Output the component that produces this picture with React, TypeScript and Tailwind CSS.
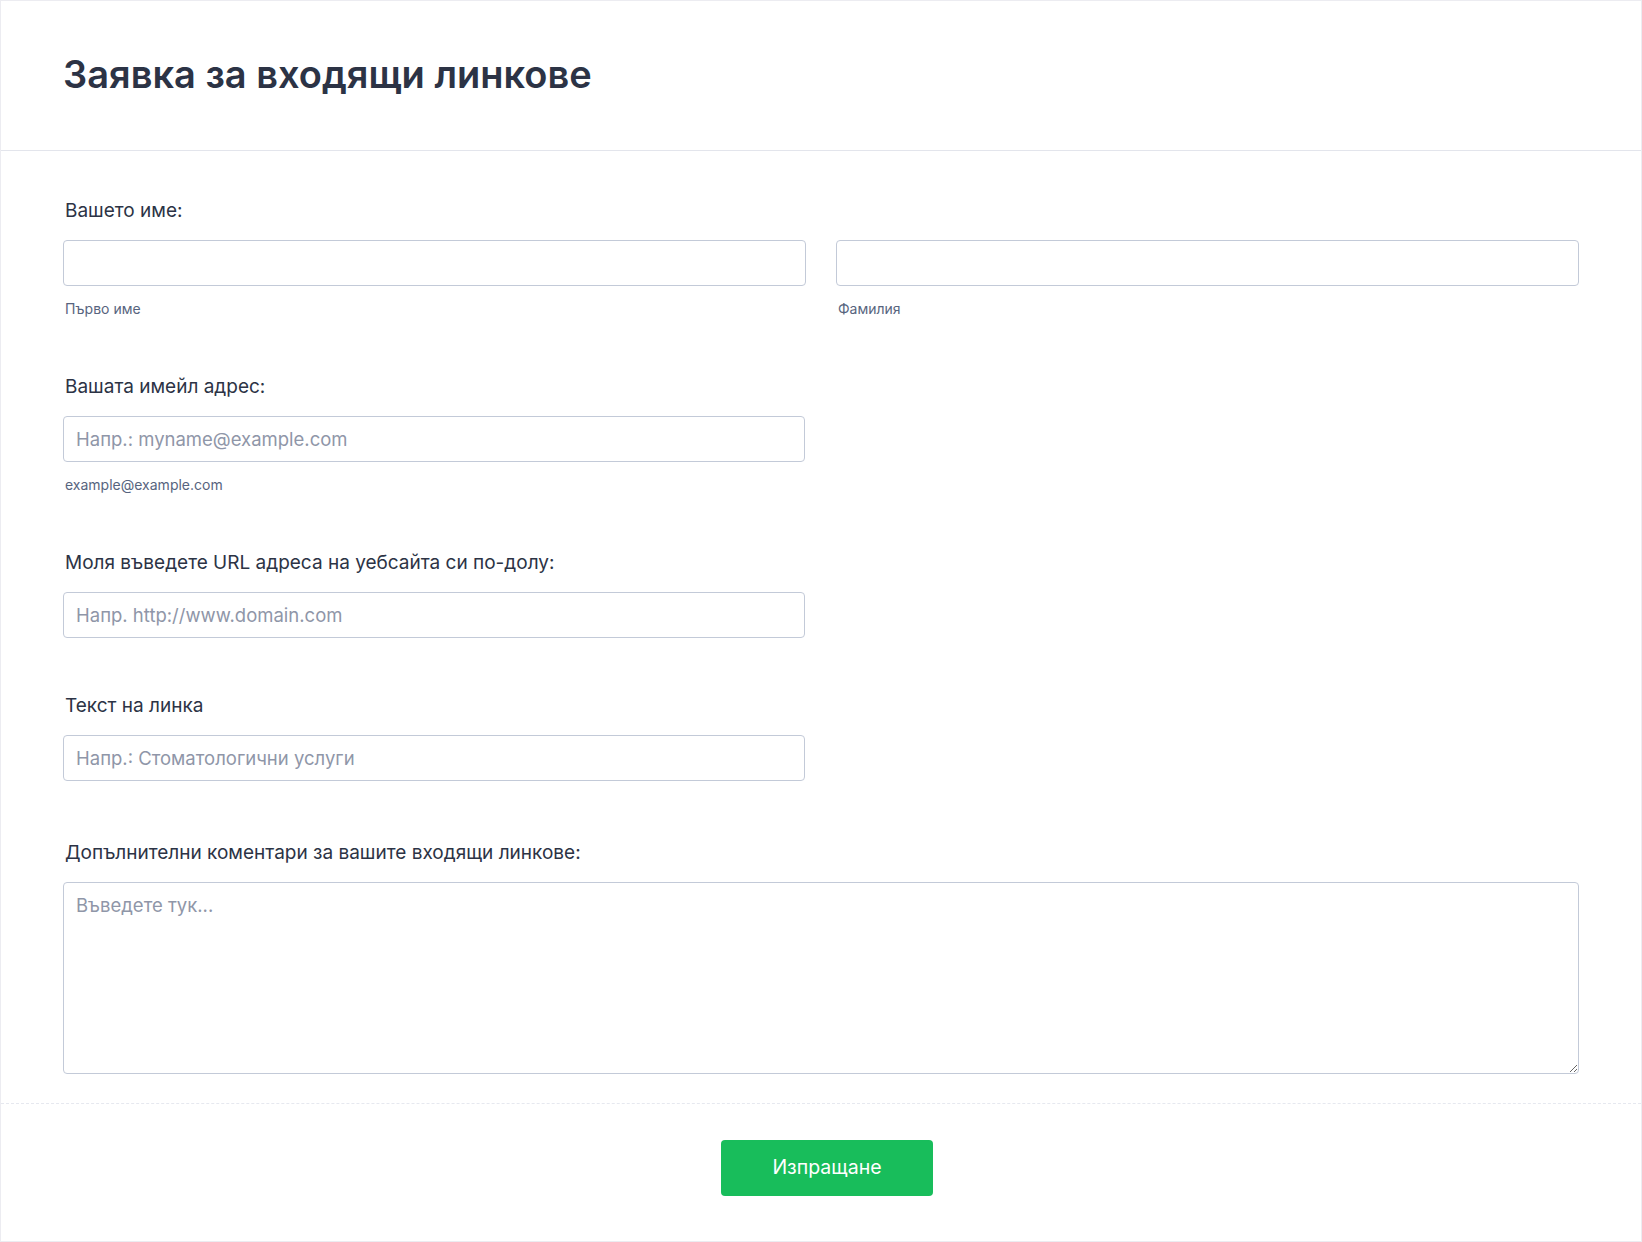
// Inbound link request form: header, stacked fields, centred submit button.
const labelCls = "block pl-[2px] text-[19px] leading-6 font-normal text-[#2c3345]";
const inputCls =
  "block h-[46px] w-full rounded-[4px] border border-[#c3cad8] bg-white px-3 text-[18.5px] text-[#2c3345] outline-none placeholder:text-[#8f96a8]";
const subCls = "mt-[13px] block pl-[2px] text-[14px] leading-5 text-[#57647e]";

function Field({
  label,
  children,
  gap = "pb-[56px]",
}: {
  label: string;
  children: React.ReactNode;
  gap?: string;
}) {
  return (
    <div className={gap}>
      <label className={labelCls}>{label}</label>
      <div className="mt-[17px]">{children}</div>
    </div>
  );
}

export default function App() {
  return (
    <div
      className="min-h-[1242px] border border-[#ececf1] bg-white"
      style={{ fontFamily: "Inter, 'Noto Sans', sans-serif" }}
    >
      {/* Header */}
      <header className="border-b border-[#e3e5ec] px-[62px] pt-[50px] pb-[53px]">
        <h1 className="text-[38px] leading-[46px] font-semibold text-[#2c3345]">
          Заявка за входящи линкове
        </h1>
      </header>

      {/* Fields */}
      <div className="px-[62px] pt-[48px]">
        <Field label="Вашето име:">
          <div className="grid grid-cols-2 gap-[30px]">
            <div>
              <input className={inputCls} />
              <span className={subCls}>Първо име</span>
            </div>
            <div>
              <input className={inputCls} />
              <span className={subCls}>Фамилия</span>
            </div>
          </div>
        </Field>

        <Field label="Вашата имейл адрес:">
          <div className="w-[742px]">
            <input className={inputCls} placeholder="Напр.: myname@example.com" />
            <span className={subCls}>example@example.com</span>
          </div>
        </Field>

        <Field label="Моля въведете URL адреса на уебсайта си по-долу:">
          <input className={`${inputCls} !w-[742px]`} placeholder="Напр. http://www.domain.com" />
        </Field>

        <Field label="Текст на линка" gap="pb-[60px]">
          <input className={`${inputCls} !w-[742px]`} placeholder="Напр.: Стоматологични услуги" />
        </Field>

        <div className="pb-[29px]">
          <label className={labelCls}>Допълнителни коментари за вашите входящи линкове:</label>
          <textarea
            className="mt-[17px] block h-[192px] w-full rounded-[4px] border border-[#c3cad8] px-3 py-[10px] text-[18.5px] leading-6 text-[#2c3345] outline-none placeholder:text-[#8f96a8]"
            placeholder="Въведете тук..."
          />
        </div>
      </div>

      {/* Footer */}
      <div className="flex justify-center border-t border-dashed border-[#e6e8ef] pt-[36px] pb-[44px] pl-[12px]">
        <button className="h-[56px] w-[212px] rounded-[4px] bg-[#18bd5b] text-[19.5px] font-normal text-white">
          Изпращане
        </button>
      </div>
    </div>
  );
}
